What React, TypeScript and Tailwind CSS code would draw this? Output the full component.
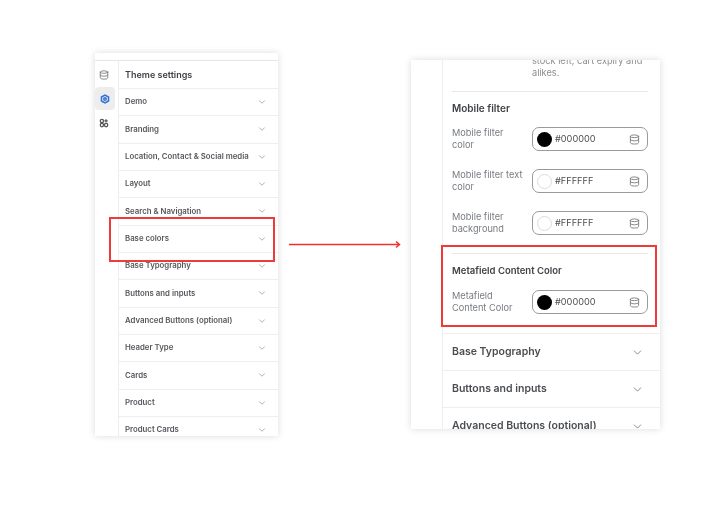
import { ChevronDown, Database } from "lucide-react";

const leftRows = [
  "Demo",
  "Branding",
  "Location, Contact & Social media",
  "Layout",
  "Search & Navigation",
  "Base colors",
  "Base Typography",
  "Buttons and inputs",
  "Advanced Buttons (optional)",
  "Header Type",
  "Cards",
  "Product",
  "Product Cards",
];

function ColorRow({ label, value, dark, mt }: { label: string[]; value: string; dark?: boolean; mt: string }) {
  return (
    <div className={`flex items-center ${mt}`}>
      <div className="w-[80px] text-[9.2px] leading-[12px] text-[#777b80]">
        {label.map((l) => (
          <div key={l} className="whitespace-nowrap">{l}</div>
        ))}
      </div>
      <div className="flex h-[24px] w-[116px] items-center rounded-[7px] border border-[#9a9a9a] pl-[4px] pr-[7px]">
        <div className={`h-[15px] w-[15px] shrink-0 rounded-full ${dark ? "bg-black" : "border border-[#dcdcdc] bg-white"}`} />
        <span className="ml-[3px] flex-1 text-[9.2px] text-[#4c4f53]">{value}</span>
        <Database size={11} strokeWidth={1.8} className="text-[#6f7174]" />
      </div>
    </div>
  );
}

function RightAccordion({ label }: { label: string }) {
  return (
    <div className="flex h-[37px] shrink-0 items-center justify-between border-t border-[#eeeeee] pl-[9px] pr-[16px]">
      <span className="whitespace-nowrap text-[10.5px] font-semibold text-[#4a4d52]">{label}</span>
      <ChevronDown size={13} strokeWidth={1.6} className="text-[#777]" />
    </div>
  );
}

export default function App() {
  return (
    <div className="relative h-[511px] w-[718px] overflow-hidden bg-white font-['Inter',sans-serif] blur-[0.4px]">
      <div className="flex items-start pl-[95px] pt-[53px]">
        <div className="flex h-[383px] w-[183px] shrink-0 flex-col overflow-hidden bg-white shadow-[0_0_7px_rgba(0,0,0,0.14)]">
          <div className="h-[8px] shrink-0 border-b border-[#e6e6e6]" />
          <div className="flex min-h-0 flex-1">
            <div className="flex w-[24px] shrink-0 flex-col items-start border-r border-[#eeeeee] pt-[9px]">
              <Database size={10} strokeWidth={1.8} className="ml-[4px] text-[#666]" />
              <div className="mt-[7px] flex h-[23px] w-[20px] items-center justify-center rounded-[4px] bg-[#ededed]">
                <svg width="10" height="10" viewBox="0 0 24 24" fill="none" stroke="#2f6fd6" strokeWidth="3.5">
                  <path d="M12 2.500 20.500 7.200v9.600L12 21.500 3.500 16.800V7.200z" />
                  <circle cx="12" cy="12" r="3" />
                </svg>
              </div>
              <svg className="ml-[4px] mt-[8px]" width="10" height="10" viewBox="0 0 24 24" fill="none" stroke="#555" strokeWidth="3">
                <circle cx="7" cy="7" r="4" />
                <circle cx="7" cy="17" r="4" />
                <circle cx="17" cy="17" r="4" />
                <path d="M17 3v8M13 7h8" />
              </svg>
            </div>
            <div className="min-w-0 flex-1">
              <div className="flex h-[27px] items-center pl-[6px] text-[9px] font-semibold text-[#3f4246]">Theme settings</div>
              {leftRows.map((r) => (
                <div key={r} className="flex h-[27.33px] items-center justify-between border-t border-[#eeeeee] pl-[6px] pr-[11px]">
                  <span className="whitespace-nowrap text-[7.8px] font-semibold text-[#55585c]">{r}</span>
                  <ChevronDown size={10} strokeWidth={1.6} className="text-[#888]" />
                </div>
              ))}
            </div>
          </div>
        </div>

        <div className="ml-[133px] mt-[7px] flex h-[369px] w-[249px] shrink-0 overflow-hidden bg-white shadow-[0_0_7px_rgba(0,0,0,0.14)]">
          <div className="w-[32px] shrink-0 border-r border-[#eeeeee]" />
          <div className="flex min-w-0 flex-1 flex-col">
            <div className="shrink-0 pl-[9px] pr-[12px]">
              <div className="ml-[80px] mt-[-5px] text-[9.2px] leading-[12px] text-[#8a8d91]">
                <div className="whitespace-nowrap">stock left, cart expiry and</div>
                <div>alikes.</div>
              </div>
              <div className="mt-[12px] border-t border-[#e8e8e8]" />
              <div className="mt-[9px] text-[10px] font-semibold leading-[14px] text-[#3f4246]">Mobile filter</div>
              <ColorRow mt="mt-[12px]" label={["Mobile filter", "color"]} value="#000000" dark />
              <ColorRow mt="mt-[18px]" label={["Mobile filter text", "color"]} value="#FFFFFF" />
              <ColorRow mt="mt-[18px]" label={["Mobile filter", "background"]} value="#FFFFFF" />
              <div className="mt-[18px] border-t border-[#e8e8e8]" />
              <div className="mt-[10px] whitespace-nowrap text-[9.500px] font-semibold leading-[14px] text-[#3f4246]">Metafield Content Color</div>
              <ColorRow mt="mt-[12px]" label={["Metafield", "Content Color"]} value="#000000" dark />
            </div>
            <div className="mt-[19px]">
              <RightAccordion label="Base Typography" />
              <RightAccordion label="Buttons and inputs" />
              <RightAccordion label="Advanced Buttons (optional)" />
            </div>
          </div>
        </div>
      </div>

      {/* annotations over the screenshots */}
      <div className="absolute left-[109px] top-[217px] h-[45px] w-[166px] border-2 border-[#f03a3a]" />
      <div className="absolute left-[441px] top-[245px] h-[82px] w-[216px] border-2 border-[#f03a3a]" />
      <svg className="absolute left-[288px] top-[239px]" width="114" height="12" viewBox="0 0 114 12" fill="none" stroke="#f03030">
        <path d="M1 5.500H111" strokeWidth="1.300" />
        <path d="M108 2.500 111.500 5.500 108 8.500" strokeWidth="1.500" />
      </svg>
    </div>
  );
}
